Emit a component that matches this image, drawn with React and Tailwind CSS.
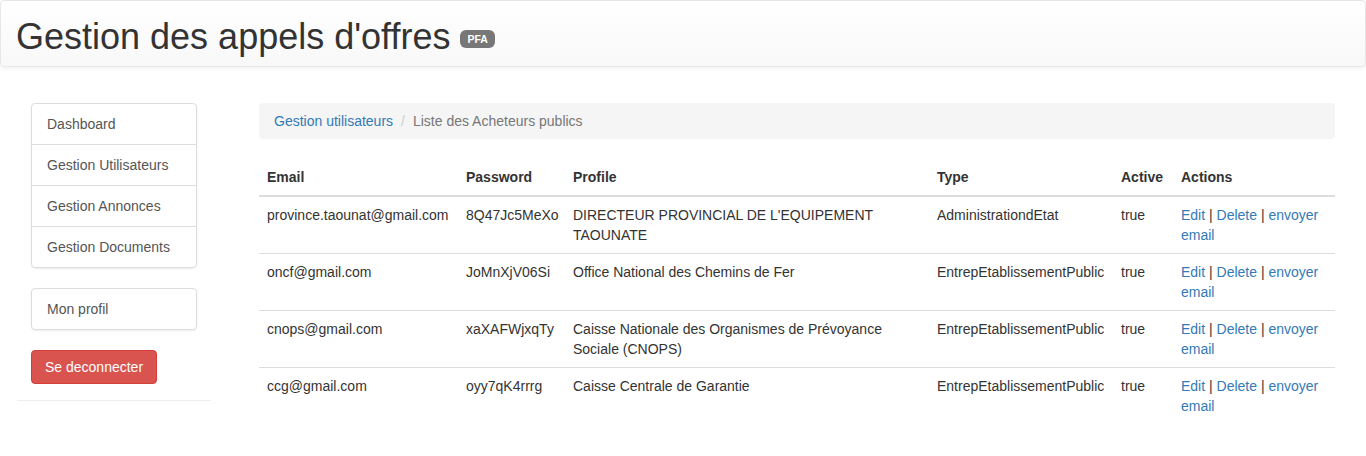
import React from "react";

const users = [
  {
    email: "province.taounat@gmail.com",
    password: "8Q47Jc5MeXo",
    profile: "DIRECTEUR PROVINCIAL DE L'EQUIPEMENT TAOUNATE",
    type: "AdministrationdEtat",
    active: "true",
  },
  {
    email: "oncf@gmail.com",
    password: "JoMnXjV06Si",
    profile: "Office National des Chemins de Fer",
    type: "EntrepEtablissementPublic",
    active: "true",
  },
  {
    email: "cnops@gmail.com",
    password: "xaXAFWjxqTy",
    profile: "Caisse Nationale des Organismes de Prévoyance Sociale (CNOPS)",
    type: "EntrepEtablissementPublic",
    active: "true",
  },
  {
    email: "ccg@gmail.com",
    password: "oyy7qK4rrrg",
    profile: "Caisse Centrale de Garantie",
    type: "EntrepEtablissementPublic",
    active: "true",
  },
];

const menu = ["Dashboard", "Gestion Utilisateurs", "Gestion Annonces", "Gestion Documents"];

export default function App() {
  return (
    <div
      className="min-h-[456px] bg-white text-[14px] leading-[20px] text-[#333]"
      style={{ fontFamily: '"Liberation Sans", Arial, sans-serif' }}
    >
      {/* Header */}
      <div className="h-[67px] rounded-[4px] border border-[#e7e7e7] bg-gradient-to-b from-white to-[#f8f8f8] shadow-[0_1px_5px_rgba(0,0,0,0.075)] pl-[15px] pr-[16px] pt-[16px]">
        <h1 className="flex items-center text-[36px] leading-[40px] font-normal text-[#333]">
          Gestion des appels d'offres
          <span className="ml-[10px] mt-[3px] rounded-[6px] bg-[#777] px-[7px] pt-[2px] pb-[2px] text-[10.5px] leading-[14px] font-bold text-white">
            PFA
          </span>
        </h1>
      </div>

      <div className="flex pt-[36px]">
        {/* Sidebar */}
        <div className="ml-[17px] w-[194px] shrink-0 self-start border-b border-[#eee] px-[14px] pb-[16px]">
          <div className="rounded-[4px] border border-[#ddd] shadow-[0_1px_2px_rgba(0,0,0,0.075)]">
            {menu.map((m, i) => (
              <div
                key={m}
                className={`px-[15px] py-[10px] text-[#555] ${i > 0 ? "border-t border-[#ddd]" : ""}`}
              >
                {m}
              </div>
            ))}
          </div>
          <div className="mt-[20px] rounded-[4px] border border-[#ddd] px-[15px] py-[10px] text-[#555] shadow-[0_1px_2px_rgba(0,0,0,0.075)]">
            Mon profil
          </div>
          <button className="mt-[20px] rounded-[4px] border border-[#d43f3a] bg-[#d9534f] px-[13px] py-[6px] text-white">
            Se deconnecter
          </button>
        </div>

        {/* Main */}
        <div className="ml-[48px] mr-[31px] flex-1">
          <div className="mb-[20px] flex items-center rounded-[4px] bg-[#f5f5f5] px-[15px] py-[8px]">
            <span className="text-[#337ab7]">Gestion utilisateurs</span>
            <span className="px-[8px] text-[#ccc]">/</span>
            <span className="text-[#777]">Liste des Acheteurs publics</span>
          </div>

          <table className="w-full table-fixed border-collapse">
            <colgroup>
              <col className="w-[199px]" />
              <col className="w-[107px]" />
              <col className="w-[364px]" />
              <col className="w-[184px]" />
              <col className="w-[60px]" />
              <col className="w-[162px]" />
            </colgroup>
            <thead>
              <tr>
                {["Email", "Password", "Profile", "Type", "Active", "Actions"].map((h) => (
                  <th key={h} className="border-b-2 border-[#ddd] p-[8px] text-left align-bottom font-bold">
                    {h}
                  </th>
                ))}
              </tr>
            </thead>
            <tbody>
              {users.map((u, i) => (
                <tr key={u.email}>
                  <td className={`p-[8px] align-top whitespace-nowrap ${i > 0 ? "border-t border-[#ddd]" : ""}`}>{u.email}</td>
                  <td className={`p-[8px] align-top whitespace-nowrap ${i > 0 ? "border-t border-[#ddd]" : ""}`}>{u.password}</td>
                  <td className={`p-[8px] align-top ${i > 0 ? "border-t border-[#ddd]" : ""}`}>{u.profile}</td>
                  <td className={`p-[8px] align-top whitespace-nowrap ${i > 0 ? "border-t border-[#ddd]" : ""}`}>{u.type}</td>
                  <td className={`p-[8px] align-top ${i > 0 ? "border-t border-[#ddd]" : ""}`}>{u.active}</td>
                  <td className={`p-[8px] align-top ${i > 0 ? "border-t border-[#ddd]" : ""}`}>
                    <span className="text-[#337ab7]">Edit</span> | <span className="text-[#337ab7]">Delete</span> |{" "}
                    <span className="text-[#337ab7]">envoyer email</span>
                  </td>
                </tr>
              ))}
            </tbody>
          </table>
        </div>
      </div>
    </div>
  );
}
